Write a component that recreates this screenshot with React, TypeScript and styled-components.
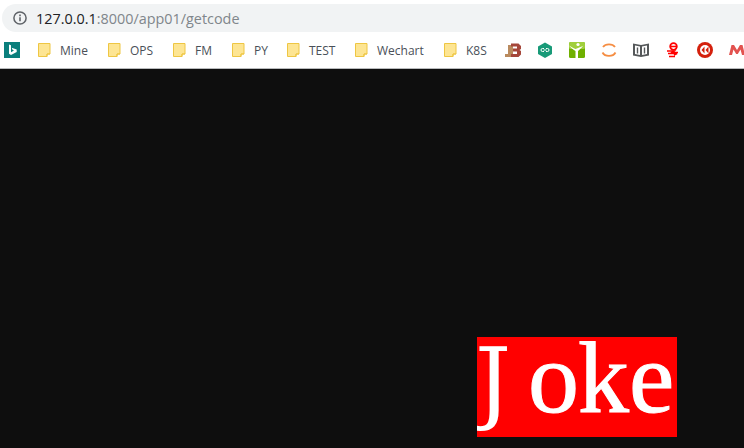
import React from 'react';
import styled, { createGlobalStyle } from 'styled-components';

const GlobalStyle = createGlobalStyle`
	html, body {
		margin: 0;
		padding: 0;
		width: 744px;
		height: 448px;
		overflow: hidden;
		background: #0e0e0e;
	}
`;

const Page = styled.div`
	display: flex;
	flex-direction: column;
	width: 744px;
	height: 448px;
`;

const BrowserBar = styled.div`
	height: 69px;
	flex: none;
	box-sizing: border-box;
	padding-top: 4px;
	background: #fff;
	border-bottom: 1px solid #b9bbbd;
`;

const AddressBar = styled.div`
	display: flex;
	align-items: center;
	gap: 9px;
	height: 28px;
	box-sizing: border-box;
	margin-left: 2px;
	padding-left: 11px;
	background: #f1f3f4;
	border-radius: 14px 0 0 14px;
`;

const Url = styled.div`
	font-family: 'Open Sans', 'Liberation Sans', sans-serif;
	font-size: 14.4px;
	color: #80868b;
`;

const Host = styled.span`
	color: #202124;
`;

const BookmarkRow = styled.div`
	display: flex;
	align-items: center;
	height: 36px;
	padding-left: 4px;
	overflow: hidden;
`;

const Bookmark = styled.div<{ $width: number }>`
	display: flex;
	align-items: center;
	width: ${p => p.$width}px;
	flex: none;
	font-family: 'Open Sans', 'Liberation Sans', sans-serif;
	font-size: 12px;
	color: #4a5058;
`;

const FolderSlot = styled.span`
	display: flex;
	margin-right: 9px;
`;

const IconSlot = styled.span<{ $width: number }>`
	display: flex;
	flex: none;
	width: ${p => p.$width}px;
`;

const Stage = styled.main`
	flex: 1;
	display: flex;
	padding: 268px 0 0 477px;
	background: #0e0e0e;
`;

const Captcha = styled.div`
	display: grid;
	grid-template-columns: repeat(4, 50px);
	align-items: start;
	width: 200px;
	height: 100px;
	overflow: hidden;
	background: #f00;
`;

const Letter = styled.span<{ $shift: number }>`
	margin-left: ${p => p.$shift}px;
	font-family: 'Liberation Serif', 'Times New Roman', serif;
	font-size: 102px;
	line-height: 81px;
	color: #fff;
	white-space: nowrap;
	-webkit-text-stroke: 1px #fff;
`;

const HookLetter = styled(Letter)`
	font-family: 'DejaVu Serif', 'Liberation Serif', serif;
	font-size: 90px;
	line-height: 87px;
	-webkit-text-stroke: 0;
`;

const Folder = () => (
	<svg width="13" height="14" viewBox="0 0 13 14">
		<path d="M.5.5h11.5v10.5h-3v2.5H.5z" fill="#fde593" stroke="#eec643" />
		<path d="M9 13.5v-2.5h3" fill="none" stroke="#eec643" />
	</svg>
);

const bookmarks = [
	{ label: 'Mine', width: 70 },
	{ label: 'OPS', width: 65 },
	{ label: 'FM', width: 59 },
	{ label: 'PY', width: 55 },
	{ label: 'TEST', width: 68 },
	{ label: 'Wechart', width: 89 },
	{ label: 'K8S', width: 61 },
];

const letters = [
	{ char: 'o', shift: 1 },
	{ char: 'k', shift: 1 },
	{ char: 'e', shift: 2 },
];

const favicons = [
	<svg key="jb" width="16" height="16" viewBox="0 0 16 16">
		<path d="M0 15v-3h3V3h5v9l-2 3z" fill="#b98a5e" />
		<path d="M6 1.500h7.500L16 4v3l-1.500 1L16 9v3.500L13.500 15H6v-3h6V9.500H8V6.500h4V4.500H6z" fill="#a5463a" />
	</svg>,
	<svg key="hex" width="16" height="16" viewBox="0 0 16 16">
		<path d="M8 .5l7 4v7.500l-7 4-7-4V4.500z" fill="#189a78" />
		<path d="M7 6.500H5.500a1.500 1.500 0 0 0 0 3H7M9 6.500h1.500a1.500 1.500 0 0 1 0 3H9M6.500 8h3" fill="none" stroke="#fff" strokeWidth="1" />
	</svg>,
	<svg key="green" width="16" height="16" viewBox="0 0 16 16">
		<rect width="16" height="16" rx="1.500" fill="#6fb000" />
		<rect width="16" height="7" rx="1.500" fill="#a0cf3c" />
		<path d="M0 3.500c3 2 5 3 6.500 3.500L14 4c-2 2.500-4 4-5 5v7H6.500V9C4.500 8 2 6 0 3.500z" fill="#fff" />
		<circle cx="9" cy="2.500" r="1.600" fill="#fff" />
	</svg>,
	<svg key="orange" width="16" height="16" viewBox="0 0 16 16">
		<path d="M2 5c2.500-3.500 9.500-3.500 12 0M1.500 10.500c2.500 4.500 10.500 4.500 13 0" fill="none" stroke="#f58d42" strokeWidth="1.800" />
	</svg>,
	<svg key="book" width="16" height="16" viewBox="0 0 16 16">
		<path d="M0 1.500l8 1.500 8-1.500v12l-8 1.500-8-1.500z" fill="#55585a" />
		<path d="M2 3.500l5 1v8.500l-5-1zM9 4.500l5-1v8.500l-5 1z" fill="#fff" />
		<path d="M4.500 5.500v6M11.500 5.500v6" stroke="#55585a" strokeWidth="1.400" />
	</svg>,
	<svg key="e" width="16" height="16" viewBox="0 0 16 16">
		<circle cx="8.500" cy="4.500" r="3.300" fill="none" stroke="#f00" strokeWidth="1.800" />
		<path d="M5.500 4.500h6M2 9h7l-2 1.500h6M3 11.500h9l-3 1.500M4 14.500h6" fill="none" stroke="#f00" strokeWidth="1.600" />
	</svg>,
	<svg key="circle" width="16" height="16" viewBox="0 0 16 16">
		<circle cx="8" cy="8" r="8" fill="#d4200c" />
		<circle cx="8" cy="8" r="5" fill="#fff" />
		<path d="M7.500 4.500L4.500 8l3 3.500zM11.500 4.500L8.500 8l3 3.500z" fill="#d4200c" />
	</svg>,
	<svg key="m" width="16" height="16" viewBox="0 0 16 16">
		<path d="M0 13l2.500-10h2.500L8 8l3-5h2.500L16 13h-3l-1.500-5.500L8.800 12H7.200L4.500 7.500 3 13z" fill="#e2524f" />
	</svg>,
];

const App: React.FC = () => {
	return (
		<Page>
			<GlobalStyle />
			<BrowserBar>
				<AddressBar>
					<svg width="14" height="14" viewBox="0 0 14 14">
						<circle cx="7" cy="7" r="6.100" fill="none" stroke="#5f6368" strokeWidth="1.500" />
						<path d="M6.200 6.200h1.600v4.100H6.200zM6.200 3.600h1.600v1.600H6.200z" fill="#5f6368" />
					</svg>
					<Url>
						<Host>127.0.0.1</Host>:8000/app01/getcode
					</Url>
				</AddressBar>
				<BookmarkRow>
					<IconSlot $width={34}>
						<svg width="16" height="16" viewBox="0 0 16 16">
							<rect width="16" height="16" fill="#0a7f7c" />
							<path d="M5 2.500l2 .7v7l3-1.600-1.500-.8-.8-2 5 1.800v2.500L7 13 5 11.800z" fill="#fff" />
						</svg>
					</IconSlot>
					{bookmarks.map(b => (
						<Bookmark key={b.label} $width={b.width}>
							<FolderSlot>
								<Folder />
							</FolderSlot>
							{b.label}
						</Bookmark>
					))}
					{favicons.map(icon => (
						<IconSlot key={icon.key} $width={32}>
							{icon}
						</IconSlot>
					))}
				</BookmarkRow>
			</BrowserBar>
			<Stage>
				<Captcha>
					<HookLetter $shift={-2}>J</HookLetter>
					{letters.map(l => (
						<Letter key={l.char} $shift={l.shift}>
							{l.char}
						</Letter>
					))}
				</Captcha>
			</Stage>
		</Page>
	);
};

export default App;
